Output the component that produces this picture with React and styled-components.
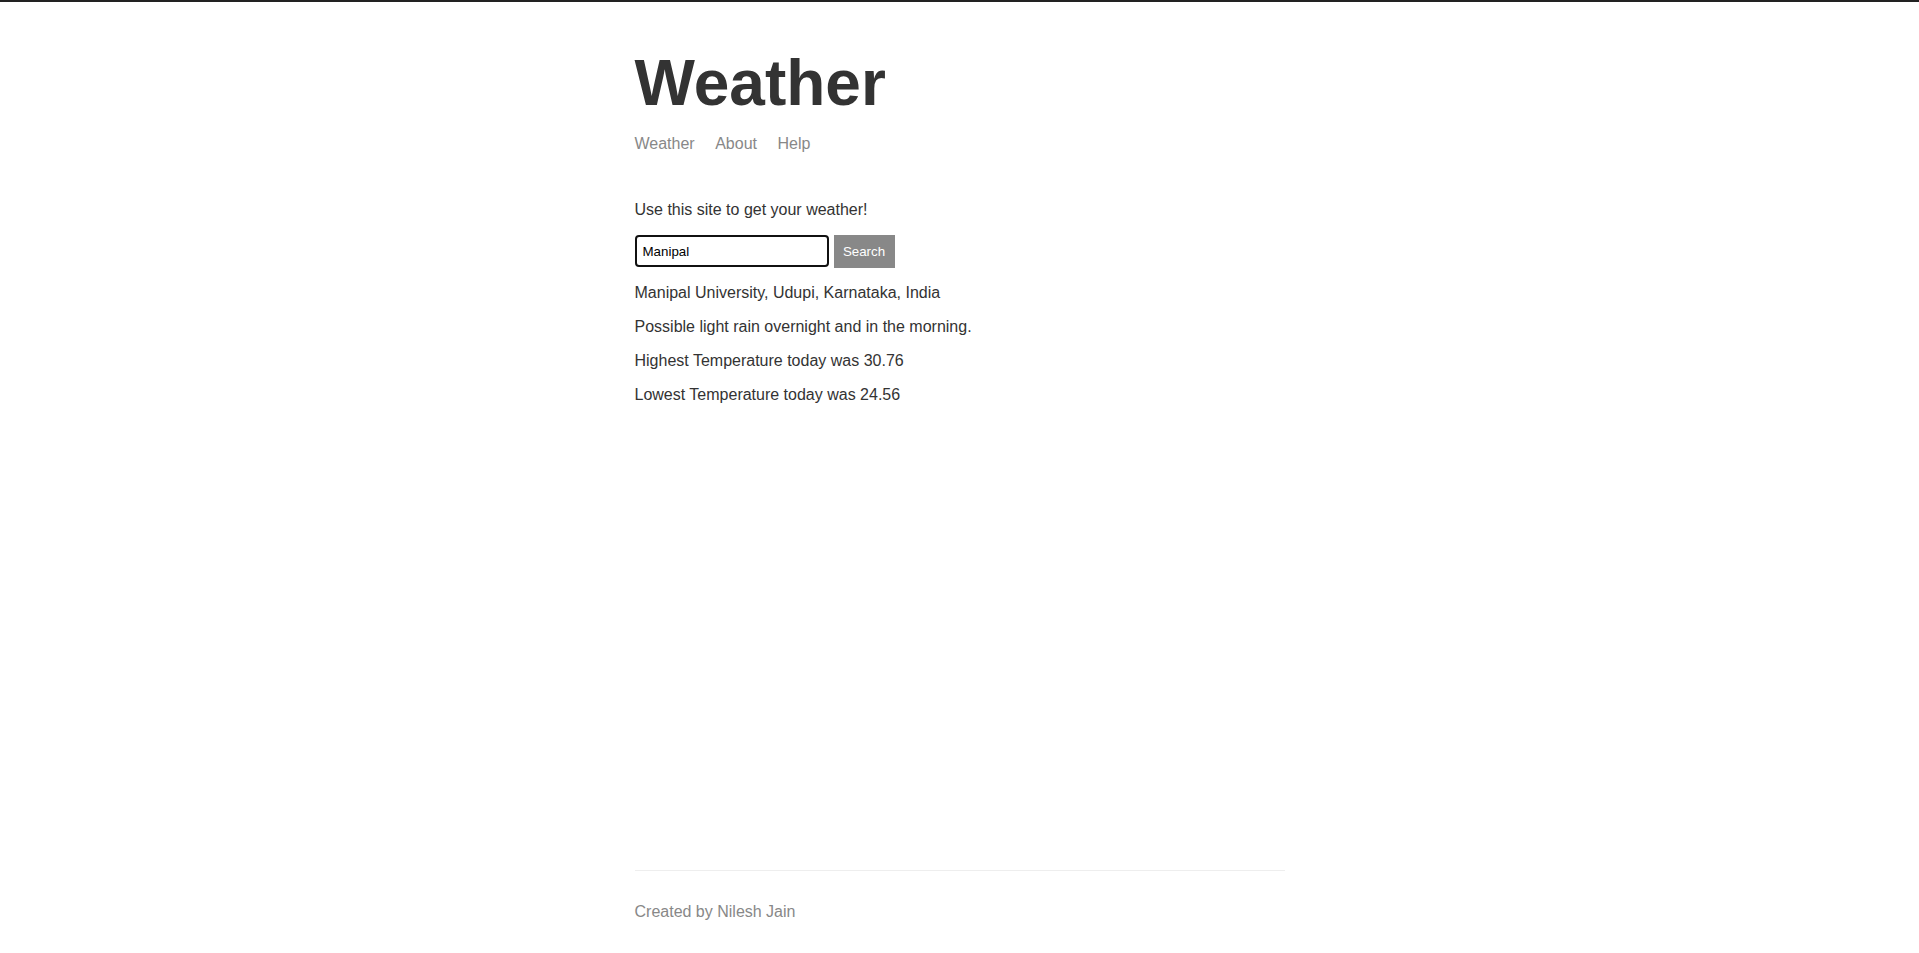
import React, { useState } from 'react'
import styled, { createGlobalStyle } from 'styled-components'

const GlobalStyle = createGlobalStyle`
html, body {
  margin: 0;
  padding: 0;
  background: #fff;
}
body {
  border-top: 2px solid #222;
  font-family: "Liberation Sans", Arial, sans-serif;
  color: #333;
}
`;

const Page = styled.div`
max-width: 650px;
margin: 0 auto;
padding: 0 16px;
min-height: calc(100vh - 2px);
display: flex;
flex-direction: column;
`;

const Main = styled.div`
flex-grow: 1;
`;

const Header = styled.header`
padding-top: 45px;
margin-bottom: 48px;
`;

const Title = styled.h1`
font-size: 64px;
font-weight: 700;
line-height: 72px;
margin: 0 0 16px 0;
color: #333;
`;

const Nav = styled.nav`
display: flex;
gap: 20.5px;
font-size: 16px;
line-height: 18px;
`;

const NavLink = styled.a`
color: #888;
text-decoration: none;
cursor: pointer;
`;

const Text = styled.p`
font-size: 16px;
line-height: 18px;
margin: 16px 0;
&:first-child { margin-top: 0; }
`;

const Form = styled.form`
display: flex;
align-items: flex-start;
gap: 5px;
margin: 0;
`;

const Input = styled.input`
box-sizing: border-box;
width: 194px;
height: 32px;
font-family: "Liberation Sans", Arial, sans-serif;
font-size: 13.33px;
color: #000;
padding: 7px 6px;
border: 2px solid #111;
border-radius: 4px;
outline: none;
`;

const Button = styled.button`
box-sizing: border-box;
height: 33px;
width: 61px;
cursor: pointer;
border: 1px solid #888;
background: #888;
color: #fff;
font-family: "Liberation Sans", Arial, sans-serif;
font-size: 13.33px;
padding: 0 8px;
`;

const Footer = styled.footer`
color: #888;
border-top: 1px solid #eee;
padding: 32px 0;
font-size: 16px;
line-height: 18px;
`;

const App = () => {
  const [city, setCity] = useState('Manipal')
  const handleSubmit = (e) => {
    e.preventDefault()
  }
  return (
    <>
      <GlobalStyle />
      <Page>
        <Main>
          <Header>
            <Title>Weather</Title>
            <Nav>
              <NavLink>Weather</NavLink>
              <NavLink>About</NavLink>
              <NavLink>Help</NavLink>
            </Nav>
          </Header>
          <Text>Use this site to get your weather!</Text>
          <Form onSubmit={handleSubmit}>
            <Input value={city} onChange={e => setCity(e.target.value)} placeholder="Location" />
            <Button>Search</Button>
          </Form>
          <Text>Manipal University, Udupi, Karnataka, India</Text>
          <Text>Possible light rain overnight and in the morning.</Text>
          <Text>Highest Temperature today was 30.76</Text>
          <Text>Lowest Temperature today was 24.56</Text>
        </Main>
        <Footer>Created by Nilesh Jain</Footer>
      </Page>
    </>
  )
}

export default App
